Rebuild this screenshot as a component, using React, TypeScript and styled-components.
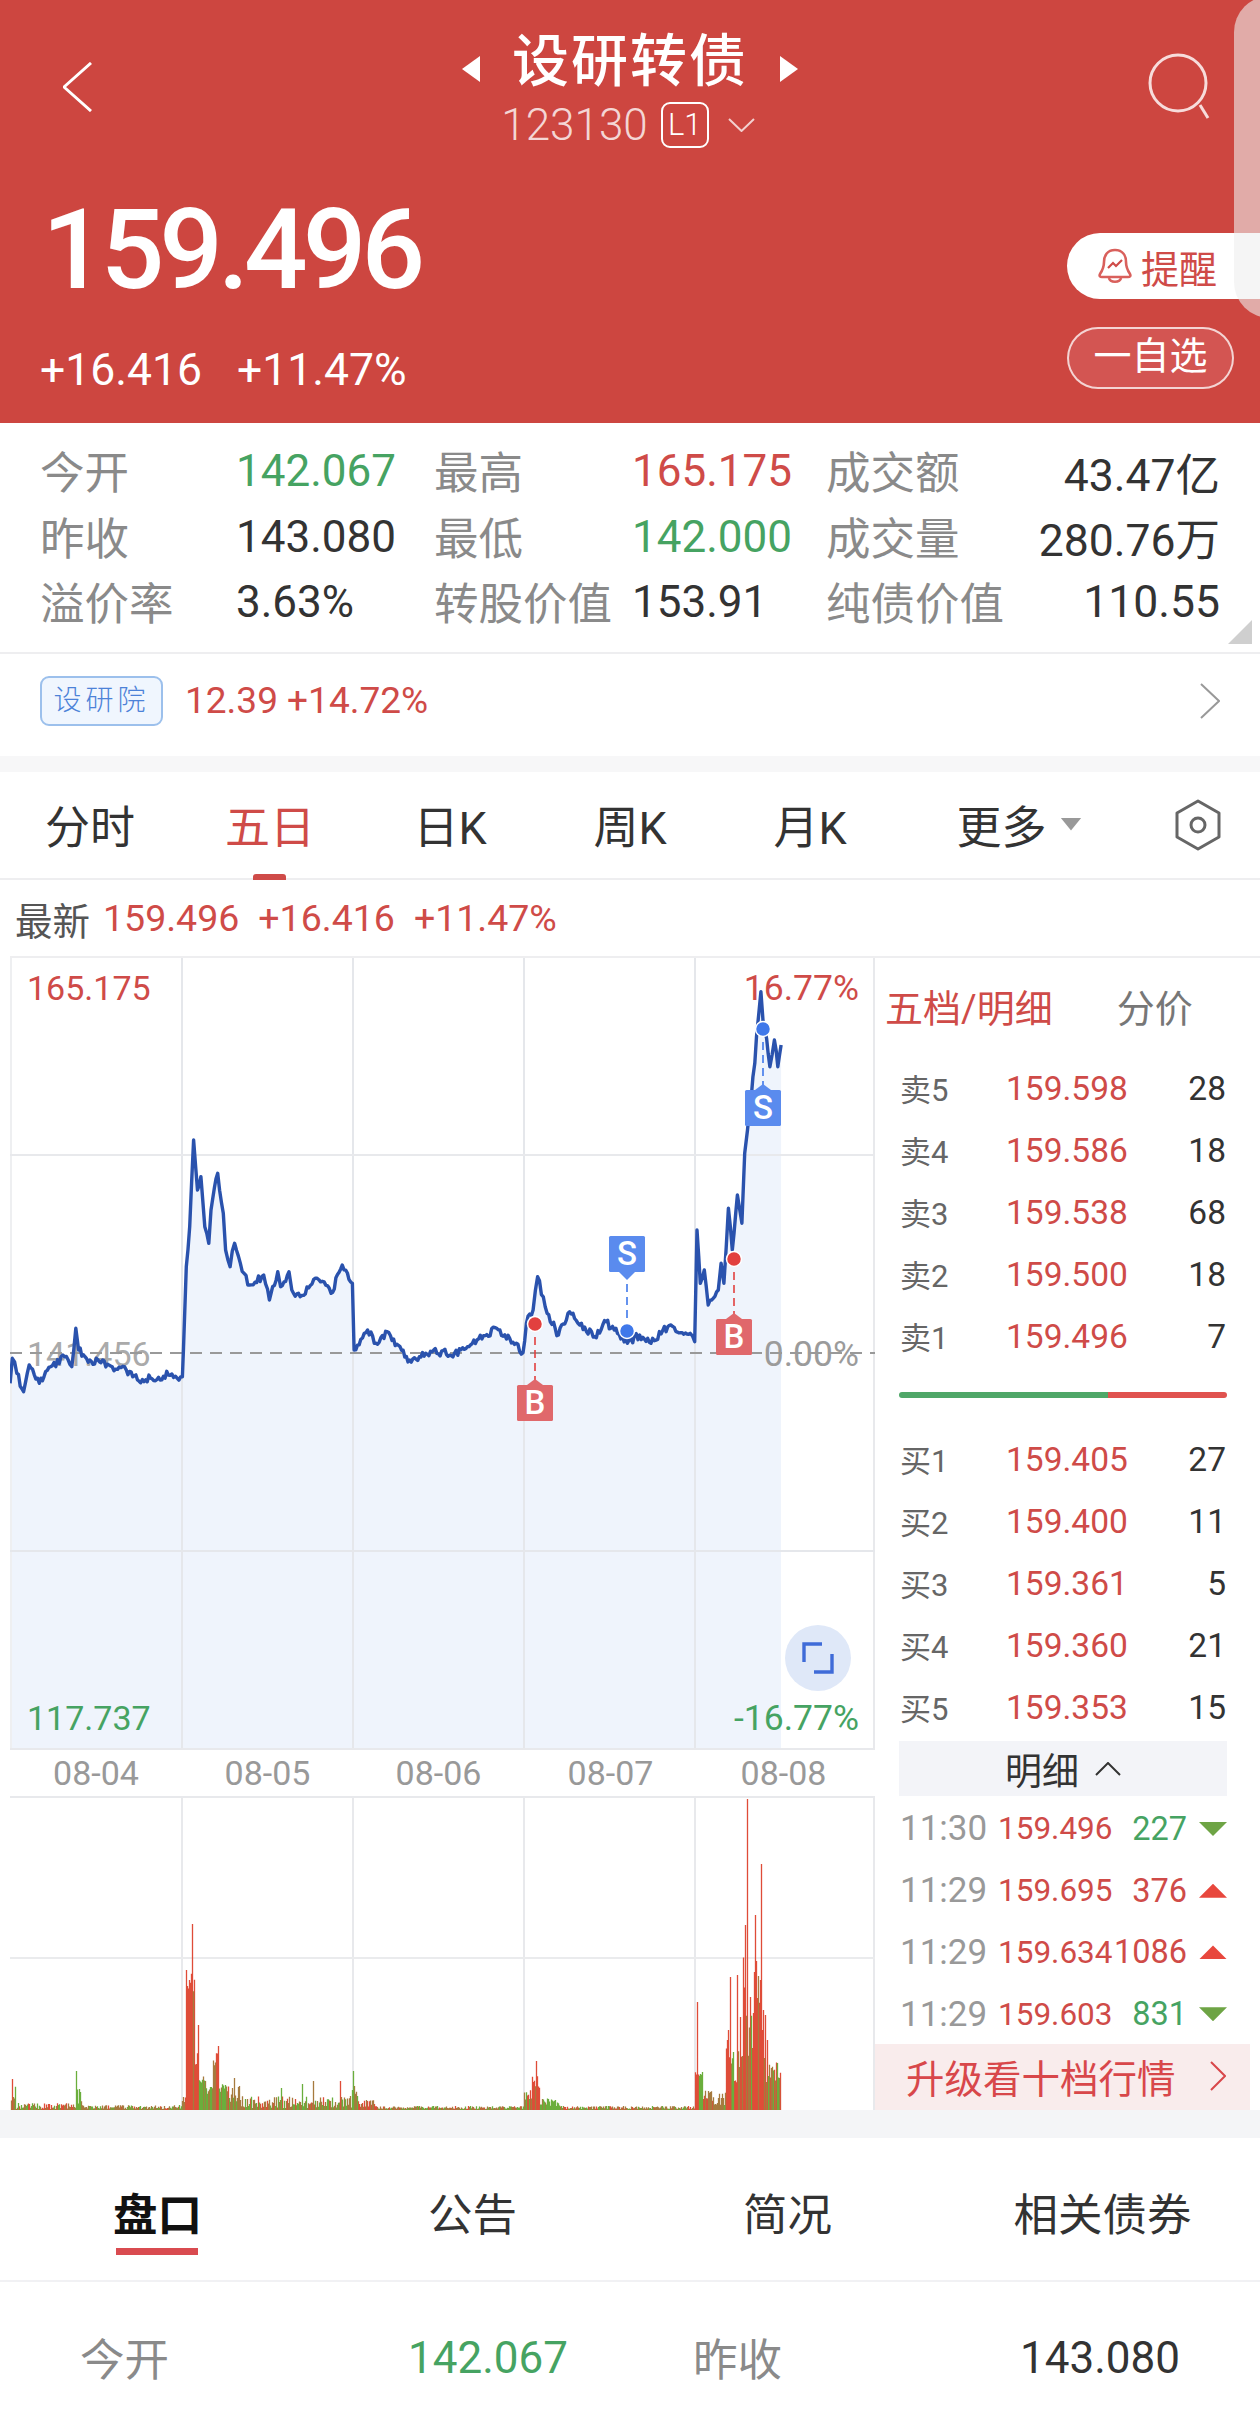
import React from "react";
import styled, { createGlobalStyle } from "styled-components";

const RED = "#cf4b48";
const GREEN = "#46a362";
const HEADER = "#cd4640";
const LINE = "#eeeef0";

type Tone = "up" | "down" | "flat";
const toneColor = (t: Tone) => (t === "up" ? RED : t === "down" ? GREEN : "#333");

const GlobalStyle = createGlobalStyle`
  html, body { margin: 0; padding: 0; background: #fff; }
  body { width: 1260px; font-family: Roboto, "Noto Sans CJK SC", sans-serif; color: #333; }
  * { box-sizing: border-box; }
`;

const Page = styled.div`
  width: 1260px;
  height: 2420px;
  overflow: hidden;
  background: #fff;
`;

/* header */
const Header = styled.header`
  position: relative;
  height: 423px;
  background: ${HEADER};
  color: #fff;
  overflow: hidden;
`;
const EdgeTab = styled.div`
  position: absolute;
  right: -10px;
  top: -4px;
  width: 36px;
  height: 322px;
  background: rgba(238, 238, 238, 0.6);
  border-radius: 36px 0 0 36px;
`;
const TopBar = styled.div`
  display: grid;
  grid-template-columns: 1fr auto 1fr;
  height: 150px;
  padding-top: 26px;
`;
const BackCell = styled.div`
  padding: 36px 0 0 63px;
`;
const SearchCell = styled.div`
  display: flex;
  justify-content: flex-end;
  padding: 27px 44px 0 0;
`;
const TitleColumn = styled.div`
  display: flex;
  flex-direction: column;
  align-items: center;
`;
const TitleLine = styled.div`
  display: flex;
  align-items: center;
  gap: 31px;
  height: 66px;
  svg {
    margin-top: 20px;
  }
`;
const Title = styled.div`
  padding-top: 5px;
  font-size: 57px;
  line-height: 66px;
  letter-spacing: 2px;
  font-weight: 500;
`;
const SubLine = styled.div`
  display: flex;
  align-items: center;
  height: 46px;
  margin-top: 10px;
  margin-left: -4px;
  color: rgba(255, 255, 255, 0.78);
`;
const Code = styled.span`
  font-size: 44px;
  font-weight: 300;
  line-height: 46px;
`;
const LevelBadge = styled.span`
  width: 48px;
  height: 46px;
  margin: 0 19px 0 13px;
  border: 2px solid #fff;
  border-radius: 9px;
  color: #fff;
  font-size: 31px;
  line-height: 42px;
  text-align: center;
  font-weight: 300;
`;
const QuoteRow = styled.div`
  display: flex;
  justify-content: space-between;
  padding-left: 40px;
`;
const Price = styled.div`
  margin: 40px 0 0 2px;
  font-size: 112px;
  line-height: 120px;
  letter-spacing: -5px;
  font-weight: 500;
`;
const ChangeLine = styled.div`
  display: flex;
  gap: 35px;
  margin-top: 35px;
  font-size: 44.5px;
  line-height: 50px;
`;
const QuoteButtons = styled.div`
  display: flex;
  flex-direction: column;
  gap: 28px;
  padding-top: 83px;
`;
const RemindButton = styled.div`
  display: flex;
  align-items: center;
  gap: 8px;
  width: 193px;
  height: 66px;
  padding-left: 30px;
  background: #fff;
  border-radius: 33px 0 0 33px;
  color: ${RED};
  font-size: 38px;
`;
const WatchButton = styled.div`
  width: 167px;
  height: 62px;
  background: #d35552;
  border: 2px solid rgba(255, 255, 255, 0.75);
  border-radius: 31px;
  font-size: 38px;
  line-height: 55px;
  text-align: center;
`;

/* stats */
const Stats = styled.section`
  position: relative;
  display: grid;
  grid-template-columns: 196px 198px 198px 194px 1fr;
  grid-auto-rows: 65.5px;
  height: 231px;
  padding: 14px 40px 0;
  border-bottom: 2px solid ${LINE};
  font-size: 44px;
  align-items: center;
`;
const Corner = styled.div`
  position: absolute;
  right: 8px;
  bottom: 8px;
  width: 24px;
  height: 24px;
  background: #cfcfcf;
  clip-path: polygon(100% 0, 100% 100%, 0 100%);
`;
const StatCell = styled.div`
  display: contents;
`;
const StatLabel = styled.span`
  color: #8a8a8a;
  font-size: 44.5px;
  white-space: nowrap;
`;
const StatValue = styled.span<{ $tone: Tone }>`
  padding-top: 3px;
  color: ${(p) => toneColor(p.$tone)};
  white-space: nowrap;
`;
const Stat3 = styled.div`
  display: flex;
  justify-content: space-between;
  align-items: center;
  font-size: 44.5px;
  white-space: nowrap;
`;

const StockLink = styled.div`
  display: flex;
  align-items: center;
  height: 102px;
  padding: 0 40px 9px;
`;
const StockBadge = styled.span`
  width: 123px;
  height: 50px;
  border: 2px solid #9cc0ec;
  border-radius: 9px;
  background: #f0f6fe;
  color: #4c82d8;
  font-size: 28px;
  font-weight: 300;
  letter-spacing: 4px;
  line-height: 45px;
  text-align: center;
`;
const StockChange = styled.span`
  margin-left: 22px;
  flex: 1;
  color: ${RED};
  font-size: 37px;
`;
const Gap = styled.div`
  height: 16px;
  background: #f7f7f8;
`;

/* period tabs */
const PeriodBar = styled.nav`
  display: flex;
  height: 108px;
  border-bottom: 2px solid ${LINE};
`;
const PeriodTab = styled.div<{ $active?: boolean; $w?: number }>`
  position: relative;
  display: flex;
  align-items: center;
  justify-content: center;
  gap: 14px;
  width: ${(p) => p.$w ?? 180}px;
  padding-bottom: 2px;
  font-size: 45px;
  color: ${(p) => (p.$active ? RED : "#333")};
  ${(p) =>
    p.$active &&
    `&::after {
      content: "";
      position: absolute;
      left: 73px;
      bottom: -2px;
      width: 33px;
      height: 6px;
      border-radius: 3px 3px 0 0;
      background: ${RED};
    }`}
`;
const SettingsTab = styled.div`
  display: flex;
  align-items: center;
  justify-content: center;
  width: 120px;
`;
const CaretDown = styled.span`
  width: 21px;
  height: 13px;
  background: #999;
  clip-path: polygon(0 0, 100% 0, 50% 100%);
`;
const LatestRow = styled.div`
  display: flex;
  align-items: center;
  gap: 19px;
  height: 76px;
  padding-left: 15px;
  font-size: 37.5px;
  color: ${RED};
`;
const LatestLabel = styled.span`
  margin-right: -6px;
  color: #555;
`;

/* market area */
const Market = styled.section`
  display: flex;
  height: 1154px;
  margin-left: 10px;
  width: 1250px;
  border-top: 2px solid ${LINE};
`;
const ChartColumn = styled.div`
  width: 865px;
`;
const Plot = styled.div`
  position: relative;
  height: 790px;
`;
const ChartSvg = styled.svg`
  display: block;
  font-family: Roboto, sans-serif;
`;
const ExpandButton = styled.div`
  position: absolute;
  left: 775px;
  top: 667px;
  display: flex;
  align-items: center;
  justify-content: center;
  width: 66px;
  height: 66px;
  border-radius: 50%;
  background: #dfe8f8;
`;
const DateAxis = styled.div`
  display: grid;
  grid-template-columns: 172px 171px 171px 173px 173px;
  height: 50px;
  border-top: 2px solid #e8e9ec;
  border-bottom: 2px solid #e8e9ec;
  width: 865px;
`;
const DateCell = styled.span`
  color: #999;
  font-size: 34px;
  line-height: 46px;
  text-align: center;
`;

const BookColumn = styled.aside`
  display: flex;
  flex-direction: column;
  width: 375px;
`;
const BookTabs = styled.div`
  display: flex;
  align-items: center;
  height: 99px;
  padding: 0 0 5px 10px;
  font-size: 38px;
  white-space: nowrap;
`;
const BookTab = styled.span<{ $active?: boolean }>`
  color: ${(p) => (p.$active ? RED : "#777")};
  margin-right: 64px;
`;
const BookRow = styled.div`
  display: grid;
  grid-template-columns: 106px 122px 1fr;
  align-items: center;
  height: 62px;
  margin: 0 24px 0 25px;
`;
const BookLabel = styled.span`
  padding-bottom: 2px;
  color: #666;
  font-size: 31px;
`;
const BookPrice = styled.span`
  color: ${RED};
  font-size: 33.5px;
`;
const BookVolume = styled.span`
  color: #333;
  font-size: 33.5px;
  text-align: right;
`;
const PressureBar = styled.div`
  display: flex;
  height: 6px;
  margin: 25px 23px 30px 24px;
  border-radius: 3px;
  overflow: hidden;
`;
const PressureBuy = styled.span`
  width: 209px;
  background: #4fa768;
`;
const PressureSell = styled.span`
  flex: 1;
  background: #e0534f;
`;
const DetailHead = styled.div`
  display: flex;
  align-items: center;
  justify-content: center;
  gap: 16px;
  height: 55px;
  margin: 3px 23px 1px 24px;
  background: #f3f4f8;
  font-size: 37px;
  color: #333;
`;
const TradeRow = styled.div`
  display: flex;
  align-items: center;
  height: 61.75px;
  padding: 2px 23px 0 25px;
`;
const TradeTime = styled.span`
  width: 98px;
  color: #999;
  font-size: 35px;
`;
const TradePrice = styled.span`
  width: 114px;
  color: ${RED};
  font-size: 31.5px;
  white-space: nowrap;
`;
const TradeVolume = styled.span<{ $tone: Tone }>`
  width: 75px;
  color: ${(p) => toneColor(p.$tone)};
  font-size: 32.5px;
  text-align: right;
`;
const TradeArrow = styled.span<{ $tone: Tone }>`
  width: 28px;
  height: 14px;
  margin-left: 12px;
  background: ${(p) => (p.$tone === "up" ? "#e8473d" : "#6ea445")};
  clip-path: ${(p) =>
    p.$tone === "up" ? "polygon(50% 0, 100% 100%, 0 100%)" : "polygon(0 0, 100% 0, 50% 100%)"};
`;
const UpgradeBar = styled.div`
  display: flex;
  align-items: center;
  justify-content: space-between;
  height: 66px;
  margin-top: auto;
  padding: 0 24px 2px 31px;
  background: #f9ecec;
  color: #d8474a;
  font-size: 38.5px;
`;

/* bottom */
const BottomGap = styled.div`
  height: 28px;
  background: #f4f5f7;
`;
const InfoTabs = styled.nav`
  display: grid;
  grid-template-columns: repeat(4, 315px);
  height: 144px;
  border-bottom: 2px solid #f1f1f4;
`;
const InfoTab = styled.div<{ $active?: boolean }>`
  position: relative;
  display: flex;
  align-items: center;
  justify-content: center;
  padding-top: 5px;
  font-size: 44.5px;
  font-weight: ${(p) => (p.$active ? 700 : 400)};
  color: ${(p) => (p.$active ? "#111" : "#333")};
  ${(p) =>
    p.$active &&
    `&::after {
      content: "";
      position: absolute;
      left: 116px;
      top: 110px;
      width: 82px;
      height: 7px;
      background: #d94b50;
    }`}
`;
const SummaryRow = styled.div`
  display: grid;
  grid-template-columns: 328px 285px 327px 1fr;
  align-items: center;
  height: 148px;
  padding-left: 80px;
  font-size: 44px;
`;

/* chart data, in page pixels */
const zoomPts: [number, number][] = [
  [18,1300],[22,1225],[30,1270],[42,1325],[52,1245],[70,1300],[90,1250],[115,1220],[128,1250],[135,1135],[140,1200],
  [160,1230],[200,1250],[225,1260],[245,1290],[300,1275],[325,1280],[327,1195],[332,950],[338,830],[345,570],[352,720],
  [358,680],[365,830],[372,880],[376,780],[388,670],[398,790],[402,900],[410,950],[418,880],[435,970],[445,1005],
  [470,975],[480,1050],[495,965],[500,1010],[515,965],[520,1020],[535,1040],[565,985],[590,1030],[610,945],[628,1000],
  [631,1200],[655,1140],[670,1180],[690,1145],[730,1230],[770,1205],[810,1210],[850,1170],[885,1135],[920,1180],
  [932,1208],[938,1120],[950,1080],[958,980],[975,1090],[995,1155],[1015,1085],[1030,1120],[1060,1160],[1080,1115],
  [1118,1180],[1140,1155],[1160,1180],[1190,1130],[1230,1150],[1238,1175],[1242,840],[1248,1000],[1255,960],[1262,1065],
  [1280,1020],[1285,940],[1290,1000],[1298,775],[1305,900],[1314,735],[1322,820],[1327,610],[1332,540],[1345,340],
  [1348,260],[1356,125],[1360,220],[1366,265],[1372,350],[1380,270],[1386,350],[1392,285],
];

const makeRandom = (seed: number) => () => {
  seed = (seed + 0x6d2b79f5) | 0;
  let t = Math.imul(seed ^ (seed >>> 15), 1 | seed);
  t = (t + Math.imul(t ^ (t >>> 7), 61 | t)) ^ t;
  return ((t ^ (t >>> 14)) >>> 0) / 4294967296;
};

const buildLine = () => {
  const rnd = makeRandom(7);
  const out: string[] = [];
  zoomPts.forEach(([zx, zy], i) => {
    const x = zx / 1.782;
    const y = 950 + zy / 3;
    if (i > 0) {
      const px = zoomPts[i - 1][0] / 1.782;
      const py = 950 + zoomPts[i - 1][1] / 3;
      const steps = Math.floor((x - px) / 1.6);
      for (let s = 1; s < steps; s++) {
        const k = s / steps;
        out.push(`${(px + (x - px) * k).toFixed(1)},${(py + (y - py) * k + (rnd() - 0.5) * 8).toFixed(1)}`);
      }
    }
    out.push(`${x.toFixed(1)},${y.toFixed(1)}`);
  });
  return out.join(" ");
};
const linePoints = buildLine();

type BarMix = "red" | "green" | "mix";
// from x, to x, lowest height, highest height, colouring
const volumeBands: [number, number, number, number, BarMix][] = [
  [11, 16, 8, 24, "mix"], [16, 70, 1, 7, "mix"], [70, 76, 2, 6, "mix"], [76, 82, 6, 30, "green"], [82, 182, 1, 5, "mix"],
  [182, 186, 6, 15, "mix"], [186, 195, 100, 150, "red"], [195, 198, 40, 60, "mix"], [198, 206, 26, 34, "green"],
  [206, 213, 16, 30, "mix"], [213, 219, 30, 58, "red"], [219, 227, 16, 26, "green"], [227, 240, 8, 24, "mix"],
  [240, 352, 2, 14, "mix"], [352, 358, 8, 26, "green"], [358, 375, 3, 10, "red"], [375, 524, 1, 4, "mix"],
  [524, 532, 8, 20, "mix"], [532, 540, 18, 34, "red"], [540, 560, 4, 12, "green"], [560, 695, 1, 4, "mix"],
  [695, 699, 10, 40, "red"], [699, 703, 30, 50, "green"], [703, 712, 10, 24, "mix"], [712, 726, 5, 18, "mix"],
  [726, 730, 30, 80, "red"], [730, 734, 40, 65, "green"], [734, 738, 25, 30, "red"], [738, 743, 40, 60, "mix"],
  [743, 748, 90, 170, "red"], [748, 754, 40, 100, "mix"], [754, 761, 100, 150, "red"], [761, 766, 40, 90, "mix"],
  [766, 781, 25, 48, "mix"],
];
const volumePeaks: Record<number, number> = {
  747: 311, 761: 246, 755: 195, 745: 185, 737: 135, 730: 133, 740: 93, 750: 113, 763: 100, 765: 95, 767: 70,
  728: 80, 697: 108, 192: 186, 186: 140, 198: 85, 218: 64, 76: 39, 353: 39, 536: 49, 12: 31, 313: 29, 340: 29,
  234: 32, 302: 26, 281: 22,
};
const buildVolume = () => {
  const rnd = makeRandom(23);
  const paths = { red: "", green: "", brown: "" };
  for (let x = 11; x < 781; x++) {
    const band = volumeBands.find((b) => x >= b[0] && x < b[1]) ?? volumeBands[0];
    const h = volumePeaks[x] ?? band[2] + (band[3] - band[2]) * rnd();
    const pick = rnd();
    const mix = band[4];
    const key: keyof typeof paths =
      volumePeaks[x] && h > 60
        ? "red"
        : mix === "red"
          ? pick < 0.8 ? "red" : "brown"
          : mix === "green"
            ? pick < 0.8 ? "green" : "brown"
            : pick < 0.55 ? "brown" : pick < 0.75 ? "red" : "green";
    paths[key] += `M${x + 0.5} 2110V${(2110 - h).toFixed(1)}`;
  }
  return paths;
};
const volume = buildVolume();

const gridX = [182, 353, 524, 695];

const Marker: React.FC<{ x: number; y: number; tip: number; letter: "S" | "B"; below: boolean; dotY: number }> = ({
  x, y, tip, letter, below, dotY,
}) => {
  const fill = letter === "S" ? "#5a8bee" : "#e0686b";
  const dot = letter === "S" ? "#3f78ea" : "#e2403f";
  return (
    <g>
      <line x1={x} x2={x} y1={dotY} y2={tip} stroke={dot} strokeWidth={1.6} strokeDasharray="8 5" />
      <polygon points={below ? `${x - 8},${y + 36} ${x + 8},${y + 36} ${x},${y + 44}` : `${x - 8},${y} ${x + 8},${y} ${x},${y - 6}`} fill={fill} />
      <rect x={x - 18} y={y} width={36} height={36} rx={1.5} fill={fill} />
      <text x={x} y={y + 29} textAnchor="middle" fontSize={33} fontWeight={500} fill="#fff">{letter}</text>
      <circle cx={x} cy={dotY} r={7.5} fill={dot} stroke="#fff" strokeWidth={1.5} />
    </g>
  );
};

const PriceChart = () => (
  <ChartSvg width={865} height={790} viewBox="10 958 865 790">
    <polygon points={`10,1748 ${linePoints} 781,1748`} fill="#eff4fc" />
    {gridX.map((x) => (
      <line key={x} x1={x} x2={x} y1={958} y2={1748} stroke="#e5e7eb" strokeWidth={2} />
    ))}
    <line x1={874} x2={874} y1={958} y2={1748} stroke="#e8e9ec" strokeWidth={2} />
    <line x1={11} x2={11} y1={958} y2={1748} stroke="#eeeff1" strokeWidth={2} />
    <line x1={10} x2={875} y1={1155} y2={1155} stroke="#e8e9ec" strokeWidth={2} />
    <line x1={10} x2={875} y1={1551} y2={1551} stroke="#e5e7eb" strokeWidth={2} />
    <text x={27} y={1000} fontSize={34} fill={RED}>165.175</text>
    <text x={859} y={1000} fontSize={35.5} fill={RED} textAnchor="end">16.77%</text>
    <text x={27} y={1366} fontSize={34} fill="#aaa">141.456</text>
    <text x={859} y={1366} fontSize={35.5} fill="#9b9b9b" textAnchor="end">0.00%</text>
    <text x={27} y={1730} fontSize={34} fill={GREEN}>117.737</text>
    <text x={859} y={1730} fontSize={35.5} fill={GREEN} textAnchor="end">-16.77%</text>
    <line x1={10} x2={875} y1={1353} y2={1353} stroke="#999" strokeWidth={2} strokeDasharray="12 8" />
    <polyline points={linePoints} fill="none" stroke="#2a52ad" strokeWidth={3.4} strokeLinejoin="round" />
    <Marker x={627} y={1236} tip={1276} letter="S" below dotY={1331} />
    <Marker x={535} y={1385} tip={1380} letter="B" below={false} dotY={1324} />
    <Marker x={734} y={1319} tip={1314} letter="B" below={false} dotY={1259} />
    <Marker x={763} y={1090} tip={1085} letter="S" below={false} dotY={1029} />
  </ChartSvg>
);

const VolumeChart = () => (
  <ChartSvg width={865} height={312} viewBox="10 1798 865 312">
    {gridX.map((x) => (
      <line key={x} x1={x} x2={x} y1={1798} y2={2110} stroke="#e8e9ec" strokeWidth={2} />
    ))}
    <line x1={874} x2={874} y1={1798} y2={2110} stroke="#e8e9ec" strokeWidth={2} />
    <line x1={10} x2={875} y1={1958} y2={1958} stroke="#eaebed" strokeWidth={2} />
    <path d={volume.red} stroke="#df4c38" strokeWidth={1.3} fill="none" />
    <path d={volume.brown} stroke="#a67a3e" strokeWidth={1.3} fill="none" />
    <path d={volume.green} stroke="#6aae3c" strokeWidth={1.3} fill="none" />
  </ChartSvg>
);

const Chevron: React.FC<{ w: number; h: number; color: string; dir: "left" | "right" | "down" | "up"; sw?: number }> = ({
  w, h, color, dir, sw = 2,
}) => {
  const d = {
    left: `M${w - 1} 1L1 ${h / 2}L${w - 1} ${h - 1}`,
    right: `M1 1L${w - 1} ${h / 2}L1 ${h - 1}`,
    down: `M1 1L${w / 2} ${h - 1}L${w - 1} 1`,
    up: `M1 ${h - 1}L${w / 2} 1L${w - 1} ${h - 1}`,
  }[dir];
  return (
    <svg width={w} height={h} viewBox={`0 0 ${w} ${h}`}>
      <path d={d} fill="none" stroke={color} strokeWidth={sw} />
    </svg>
  );
};

const SideTriangle: React.FC<{ right?: boolean }> = ({ right }) => (
  <svg width={20} height={28} viewBox="0 0 20 28">
    <path d={right ? "M1 1L19 14L1 27Z" : "M19 1L1 14L19 27Z"} fill="#fff" />
  </svg>
);

const sells = [
  ["卖5", "159.598", "28"],
  ["卖4", "159.586", "18"],
  ["卖3", "159.538", "68"],
  ["卖2", "159.500", "18"],
  ["卖1", "159.496", "7"],
];
const buys = [
  ["买1", "159.405", "27"],
  ["买2", "159.400", "11"],
  ["买3", "159.361", "5"],
  ["买4", "159.360", "21"],
  ["买5", "159.353", "15"],
];
const trades: { time: string; price: string; vol: string; tone: Tone }[] = [
  { time: "11:30", price: "159.496", vol: "227", tone: "down" },
  { time: "11:29", price: "159.695", vol: "376", tone: "up" },
  { time: "11:29", price: "159.634", vol: "1086", tone: "up" },
  { time: "11:29", price: "159.603", vol: "831", tone: "down" },
];
const stats: [string, string, Tone, string, string, Tone, string, string][] = [
  ["今开", "142.067", "down", "最高", "165.175", "up", "成交额", "43.47亿"],
  ["昨收", "143.080", "flat", "最低", "142.000", "down", "成交量", "280.76万"],
  ["溢价率", "3.63%", "flat", "转股价值", "153.91", "flat", "纯债价值", "110.55"],
];

export default function App() {
  return (
    <Page>
      <GlobalStyle />
      <Header>
        <TopBar>
          <BackCell>
            <Chevron w={29} h={50} color="#fff" dir="left" sw={3} />
          </BackCell>
          <TitleColumn>
            <TitleLine>
              <SideTriangle />
              <Title>设研转债</Title>
              <SideTriangle right />
            </TitleLine>
            <SubLine>
              <Code>123130</Code>
              <LevelBadge>L1</LevelBadge>
              <Chevron w={27} h={14} color="rgba(255,255,255,0.75)" dir="down" />
            </SubLine>
          </TitleColumn>
          <SearchCell>
            <svg width={70} height={70} viewBox="0 0 70 70">
              <circle cx={32} cy={30} r={28} fill="none" stroke="#f7dcdb" strokeWidth={3} />
              <path d="M54 52L62 65" fill="none" stroke="#f7dcdb" strokeWidth={3} />
            </svg>
          </SearchCell>
        </TopBar>
        <QuoteRow>
          <div>
            <Price>159.496</Price>
            <ChangeLine>
              <span>+16.416</span>
              <span>+11.47%</span>
            </ChangeLine>
          </div>
          <QuoteButtons>
            <RemindButton>
              <svg width={36} height={36} viewBox="0 0 36 36">
                <path d="M18 2C10 2 7 8 7 14C7 20 5 23 3 26C2 28 3 29 5 29H31C33 29 34 28 33 26C31 23 29 20 29 14C29 8 26 2 18 2Z" fill="none" stroke="#d9605c" strokeWidth={2.6} />
                <path d="M12 30C13 35 23 35 24 30" fill="none" stroke="#d9605c" strokeWidth={2.6} />
                <path d="M11 20L16 15L19 18L25 12" fill="none" stroke={RED} strokeWidth={2.2} />
              </svg>
              提醒
            </RemindButton>
            <WatchButton>一自选</WatchButton>
          </QuoteButtons>
        </QuoteRow>
        <EdgeTab />
      </Header>

      <Stats>
        {stats.map((row) => (
          <StatCell key={row[0]}>
            <StatLabel>{row[0]}</StatLabel>
            <StatValue $tone={row[2]}>{row[1]}</StatValue>
            <StatLabel>{row[3]}</StatLabel>
            <StatValue $tone={row[5]}>{row[4]}</StatValue>
            <Stat3>
              <StatLabel>{row[6]}</StatLabel>
              <StatValue $tone="flat">{row[7]}</StatValue>
            </Stat3>
          </StatCell>
        ))}
        <Corner />
      </Stats>

      <StockLink>
        <StockBadge>设研院</StockBadge>
        <StockChange>12.39 +14.72%</StockChange>
        <Chevron w={20} h={36} color="#999" dir="right" />
      </StockLink>
      <Gap />

      <PeriodBar>
        <PeriodTab>分时</PeriodTab>
        <PeriodTab $active>五日</PeriodTab>
        <PeriodTab>日K</PeriodTab>
        <PeriodTab>周K</PeriodTab>
        <PeriodTab>月K</PeriodTab>
        <PeriodTab $w={238}>
          更多<CaretDown />
        </PeriodTab>
        <SettingsTab>
          <svg width={48} height={52} viewBox="0 0 48 52">
            <path d="M24 2L45 14V38L24 50L3 38V14Z" fill="none" stroke="#666" strokeWidth={3} strokeLinejoin="round" />
            <circle cx={24} cy={26} r={7} fill="none" stroke="#666" strokeWidth={3} />
          </svg>
        </SettingsTab>
      </PeriodBar>
      <LatestRow>
        <LatestLabel>最新</LatestLabel>
        <span>159.496</span>
        <span>+16.416</span>
        <span>+11.47%</span>
      </LatestRow>

      <Market>
        <ChartColumn>
          <Plot>
            <PriceChart />
            <ExpandButton>
              <svg width={34} height={34} viewBox="0 0 34 34">
                <path d="M3 21V3H21M13 31H31V13" fill="none" stroke="#3f6bd8" strokeWidth={3.4} />
              </svg>
            </ExpandButton>
          </Plot>
          <DateAxis>
            {["08-04", "08-05", "08-06", "08-07", "08-08"].map((d) => (
              <DateCell key={d}>{d}</DateCell>
            ))}
          </DateAxis>
          <VolumeChart />
        </ChartColumn>

        <BookColumn>
          <BookTabs>
            <BookTab $active>五档/明细</BookTab>
            <BookTab>分价</BookTab>
          </BookTabs>
          {sells.map((r) => (
            <BookRow key={r[0]}>
              <BookLabel>{r[0]}</BookLabel>
              <BookPrice>{r[1]}</BookPrice>
              <BookVolume>{r[2]}</BookVolume>
            </BookRow>
          ))}
          <PressureBar>
            <PressureBuy />
            <PressureSell />
          </PressureBar>
          {buys.map((r) => (
            <BookRow key={r[0]}>
              <BookLabel>{r[0]}</BookLabel>
              <BookPrice>{r[1]}</BookPrice>
              <BookVolume>{r[2]}</BookVolume>
            </BookRow>
          ))}
          <DetailHead>
            明细
            <Chevron w={26} h={14} color="#333" dir="up" />
          </DetailHead>
          {trades.map((t) => (
            <TradeRow key={t.price}>
              <TradeTime>{t.time}</TradeTime>
              <TradePrice>{t.price}</TradePrice>
              <TradeVolume $tone={t.tone}>{t.vol}</TradeVolume>
              <TradeArrow $tone={t.tone} />
            </TradeRow>
          ))}
          <UpgradeBar>
            升级看十档行情
            <Chevron w={16} h={30} color="#d8474a" dir="right" />
          </UpgradeBar>
        </BookColumn>
      </Market>

      <BottomGap />
      <InfoTabs>
        <InfoTab $active>盘口</InfoTab>
        <InfoTab>公告</InfoTab>
        <InfoTab>简况</InfoTab>
        <InfoTab>相关债券</InfoTab>
      </InfoTabs>
      <SummaryRow>
        <StatLabel>今开</StatLabel>
        <StatValue $tone="down">142.067</StatValue>
        <StatLabel>昨收</StatLabel>
        <StatValue $tone="flat">143.080</StatValue>
      </SummaryRow>
    </Page>
  );
}
